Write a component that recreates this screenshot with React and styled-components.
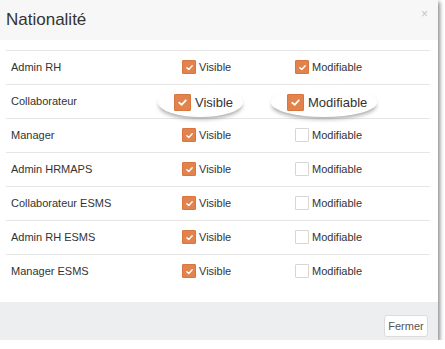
import React from 'react';
import styled, { createGlobalStyle } from 'styled-components';

const GlobalStyle = createGlobalStyle`
  html, body {
    margin: 0;
    padding: 0;
    background: #ffffff;
    font-family: "Liberation Sans", Arial, sans-serif;
  }
`;

const Modal = styled.div`
  width: 438px;
  height: 340px;
  display: flex;
  flex-direction: column;
  background: #ffffff;
  box-shadow: 2px 2px 4px rgba(0, 0, 0, 0.45);
`;

const Header = styled.div`
  height: 40px;
  flex: none;
  display: flex;
  align-items: center;
  justify-content: space-between;
  padding: 0 10px 0 6px;
  background: #f7f7f7;
`;

const Title = styled.h4`
  margin: 0;
  font-size: 17px;
  font-weight: normal;
  color: #333;
`;

const Close = styled.span`
  font-size: 12px;
  color: #c4c4c4;
  margin-top: -12px;
  line-height: 1;
`;

const Body = styled.div`
  flex: 1;
  padding: 10px 8px 0 6px;
`;

const Row = styled.div`
  display: grid;
  grid-template-columns: 176px 113px 1fr;
  align-items: center;
  height: 34px;
  padding-bottom: 1px;
  border-top: 1px solid #e6e6e6;
  box-sizing: border-box;
`;

const Label = styled.div`
  padding-left: 5px;
  font-size: 11px;
  color: #333;
`;

const Option = styled.div`
  display: flex;
  align-items: center;
  gap: ${p => (p.$zoom ? '4px' : '3px')};
  font-size: ${p => (p.$zoom ? '13px' : '11px')};
  color: #333;
  ${p =>
    p.$zoom &&
    `
    margin-left: -24px;
    margin-top: 2px;
    width: fit-content;
    padding: 6px 10px 6px 16px;
    border-radius: 50%;
    box-shadow: 0 3px 4px -1px rgba(0, 0, 0, 0.35);
  `}
`;

const Box = styled.span`
  width: ${p => (p.$zoom ? '17px' : '14px')};
  height: ${p => (p.$zoom ? '17px' : '14px')};
  box-sizing: border-box;
  display: flex;
  align-items: center;
  justify-content: center;
  border-radius: 1px;
  background: ${p => (p.$checked ? '#e2824c' : '#ffffff')};
  border: 1px solid ${p => (p.$checked ? '#d9763f' : '#d6d6d6')};
`;

const Footer = styled.div`
  height: 38px;
  flex: none;
  display: flex;
  align-items: flex-end;
  justify-content: flex-end;
  padding: 0 10px 3px 0;
  box-sizing: border-box;
  background: #eceeef;
`;

const Button = styled.button`
  height: 22px;
  width: 44px;
  padding: 0;
  background: #fff;
  border: 1px solid #dcdcdc;
  border-radius: 3px;
  font-family: inherit;
  font-size: 11px;
  color: #555;
`;

const Check = ({ size }) => (
  <svg width={size} height={size} viewBox="0 0 10 10">
    <path d="M2 5.2 L4.2 7.2 L8 3" fill="none" stroke="#fff" strokeWidth="1.6" strokeLinecap="round" strokeLinejoin="round" />
  </svg>
);

const CheckOption = ({ label, checked, zoom }) => (
  <Option $zoom={zoom}>
    <Box $checked={checked} $zoom={zoom}>
      {checked && <Check size={zoom ? 11 : 9} />}
    </Box>
    {label}
  </Option>
);

const rows = [
  { name: 'Admin RH', visible: true, edit: true },
  { name: 'Collaborateur', visible: true, edit: true, zoom: true },
  { name: 'Manager', visible: true, edit: false },
  { name: 'Admin HRMAPS', visible: true, edit: false },
  { name: 'Collaborateur ESMS', visible: true, edit: false },
  { name: 'Admin RH ESMS', visible: true, edit: false },
  { name: 'Manager ESMS', visible: true, edit: false },
];

export default function App() {
  return (
    <>
      <GlobalStyle />
      <Modal>
        <Header>
          <Title>Nationalité</Title>
          <Close>×</Close>
        </Header>
        <Body>
          {rows.map(r => (
            <Row key={r.name}>
              <Label>{r.name}</Label>
              <div>
                <CheckOption label="Visible" checked={r.visible} zoom={r.zoom} />
              </div>
              <div>
                <CheckOption label="Modifiable" checked={r.edit} zoom={r.zoom} />
              </div>
            </Row>
          ))}
        </Body>
        <Footer>
          <Button>Fermer</Button>
        </Footer>
      </Modal>
    </>
  );
}
